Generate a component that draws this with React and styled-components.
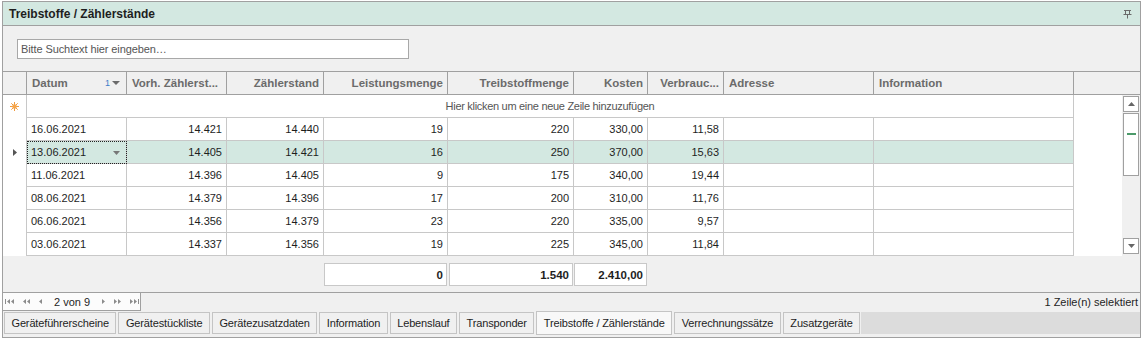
import React from "react";
import styled, { createGlobalStyle } from "styled-components";

const GlobalStyle = createGlobalStyle`
  html, body {
    margin: 0;
    padding: 0;
    background: #ffffff;
  }
  body {
    font-family: "Liberation Sans", Arial, sans-serif;
    font-size: 11px;
    color: #1e1e1e;
  }
`;

const TEMPLATE = "24px 100px 100px 97px 124px 126px 74px 76px 150px 200px 1fr";
const ROW_TEMPLATE = "24px 100px 100px 97px 124px 126px 74px 76px 150px 200px";

const columns = [
  { key: "datum", label: "Datum", align: "left" },
  { key: "vorh", label: "Vorh. Zählerst...", align: "left" },
  { key: "zaehler", label: "Zählerstand", align: "right" },
  { key: "leistung", label: "Leistungsmenge", align: "right", sum: "0" },
  { key: "treib", label: "Treibstoffmenge", align: "right", sum: "1.540" },
  { key: "kosten", label: "Kosten", align: "right", sum: "2.410,00" },
  { key: "verbrauch", label: "Verbrauc...", align: "right" },
  { key: "adresse", label: "Adresse", align: "left" },
  { key: "info", label: "Information", align: "left" },
];

const rows = [
  ["16.06.2021", "14.421", "14.440", "19", "220", "330,00", "11,58", "", ""],
  ["13.06.2021", "14.405", "14.421", "16", "250", "370,00", "15,63", "", ""],
  ["11.06.2021", "14.396", "14.405", "9", "175", "340,00", "19,44", "", ""],
  ["08.06.2021", "14.379", "14.396", "17", "200", "310,00", "11,76", "", ""],
  ["06.06.2021", "14.356", "14.379", "23", "220", "335,00", "9,57", "", ""],
  ["03.06.2021", "14.337", "14.356", "19", "225", "345,00", "11,84", "", ""],
];

const tabs = [
  "Geräteführerscheine",
  "Gerätestückliste",
  "Gerätezusatzdaten",
  "Information",
  "Lebenslauf",
  "Transponder",
  "Treibstoffe / Zählerstände",
  "Verrechnungssätze",
  "Zusatzgeräte",
];

const Panel = styled.div`
  margin: 1px 0 0 2px;
  width: 1139px;
  box-sizing: border-box;
  border: 1px solid #a0a0a0;
  background: #f0f0f0;
`;

const TitleBar = styled.div`
  height: 24px;
  box-sizing: border-box;
  display: flex;
  align-items: center;
  justify-content: space-between;
  padding: 0 8px 0 6px;
  background: #d3e8e1;
  border-bottom: 1px solid #a0a0a0;
`;

const Title = styled.span`
  font-weight: bold;
  font-size: 12px;
  color: #1e1e1e;
`;

const SearchArea = styled.div`
  height: 45px;
  box-sizing: border-box;
  padding: 13px 0 0 14px;
`;

const SearchInput = styled.input`
  width: 392px;
  height: 20px;
  box-sizing: border-box;
  border: 1px solid #a8a8a8;
  background: #fff;
  padding: 0 3px;
  font-family: inherit;
  font-size: 11px;
  letter-spacing: -0.1px;
  outline: none;
  &::placeholder {
    color: #555;
  }
`;

const HeaderRow = styled.div`
  display: grid;
  grid-template-columns: ${TEMPLATE};
  height: 24px;
  box-sizing: border-box;
  border-top: 1px solid #a0a0a0;
  border-bottom: 1px solid #a0a0a0;
`;

const HeaderCell = styled.div`
  display: flex;
  align-items: center;
  justify-content: ${(p) => (p.$align === "right" ? "flex-end" : "space-between")};
  padding: 0 4px 0 5px;
  border-right: ${(p) => (p.$last ? "none" : "1px solid #a0a0a0")};
  font-weight: bold;
  font-size: 11.5px;
  color: #6b6b6b;
  white-space: nowrap;
  overflow: hidden;
`;

const SortMark = styled.span`
  display: inline-flex;
  align-items: center;
  gap: 2px;
  margin-right: 2px;
  font-size: 9px;
  font-weight: normal;
  color: #3d7cc9;
`;

const Body = styled.div`
  display: flex;
  height: 161px;
  background: #fff;
`;

const Rows = styled.div`
  flex: 1;
`;

const NewRow = styled.div`
  display: grid;
  grid-template-columns: 24px 1047px;
  height: 23px;
`;

const Indicator = styled.div`
  display: flex;
  align-items: center;
  justify-content: center;
  border-right: 1px solid #c8c8c8;
  box-sizing: border-box;
`;

const NewRowText = styled.div`
  display: flex;
  align-items: center;
  justify-content: center;
  border-bottom: 1px solid #c8c8c8;
  border-right: 1px solid #c8c8c8;
  letter-spacing: -0.3px;
  color: #555;
`;

const DataRow = styled.div`
  display: grid;
  grid-template-columns: ${ROW_TEMPLATE};
  height: 23px;
`;

const Cell = styled.div`
  position: relative;
  display: flex;
  align-items: center;
  justify-content: ${(p) => (p.$align === "right" ? "flex-end" : "flex-start")};
  padding: 0 4px 0 4px;
  box-sizing: border-box;
  border-right: 1px solid #c8c8c8;
  border-bottom: 1px solid #c8c8c8;
  background: ${(p) => (p.$selected ? "#d3e8e1" : "#fff")};
  color: #1e1e1e;
  white-space: nowrap;
  ${(p) => p.$focused && "outline: 1px dotted #222; outline-offset: -1px;"}
`;

const DropArrow = styled.svg`
  position: absolute;
  right: 6px;
  top: 10px;
`;

const ScrollBar = styled.div`
  width: 18px;
  display: flex;
  flex-direction: column;
  align-items: center;
  padding: 1px 0 2px;
  box-sizing: border-box;
  background: #f0f0f0;
`;

const ScrollButton = styled.div`
  width: 16px;
  height: 16px;
  box-sizing: border-box;
  border: 1px solid #a0a0a0;
  background: #fff;
  display: flex;
  align-items: center;
  justify-content: center;
`;

const Thumb = styled.div`
  width: 16px;
  height: 63px;
  margin-top: 1px;
  box-sizing: border-box;
  border: 1px solid #a0a0a0;
  background: #fff;
  display: flex;
  justify-content: center;
  &::after {
    content: "";
    width: 9px;
    height: 2px;
    margin-top: 19px;
    background: #4c9a6a;
  }
`;

const Spacer = styled.div`
  flex: 1;
`;

const Footer = styled.div`
  display: grid;
  grid-template-columns: ${TEMPLATE};
  align-items: center;
  height: 37px;
  box-sizing: border-box;
  border-top: 1px solid #f0f0f0;
  border-bottom: 1px solid #a0a0a0;
`;

const SumCell = styled.div`
  height: 23px;
  margin: 0 1px 0 ${(p) => (p.$offset ? "1px" : "0")};
  box-sizing: border-box;
  border: 1px solid #c8c8c8;
  background: #fff;
  display: flex;
  align-items: center;
  justify-content: flex-end;
  padding-right: 3px;
  font-weight: bold;
  font-size: 11.5px;
`;

const StatusBar = styled.div`
  display: flex;
  justify-content: space-between;
  align-items: center;
  height: 18px;
`;

const Pager = styled.div`
  width: 138px;
  height: 18px;
  box-sizing: border-box;
  display: flex;
  align-items: center;
  gap: 9px;
  padding-left: 2px;
  background: #fcfcfc;
  border-right: 1px solid #a0a0a0;
  border-bottom: 1px solid #a0a0a0;
`;

const PagerText = styled.span`
  margin: 0 3px;
  font-size: 11px;
  color: #1e1e1e;
`;

const StatusText = styled.span`
  padding-right: 2px;
`;

const TabArea = styled.div`
  height: 26px;
  box-sizing: border-box;
  padding: 1px 0 0 1px;
`;

const TabStrip = styled.div`
  display: flex;
  height: 22px;
  gap: 2px;
`;

const Tab = styled.div`
  display: flex;
  align-items: center;
  padding: 0 6.5px;
  box-sizing: border-box;
  border: 1px solid #c4c4c4;
  white-space: nowrap;
  letter-spacing: -0.15px;
  background: ${(p) => (p.$active ? "#f8f8f8" : "#f0f0f0")};
  height: ${(p) => (p.$active ? "24px" : "22px")};
  margin-top: ${(p) => (p.$active ? "-1px" : "0")};
  color: #1e1e1e;
`;

const TabFill = styled.div`
  flex: 1;
  margin-left: -1px;
  background: #dcdcdc;
`;

function PinIcon() {
  return (
    <svg width="9" height="10" viewBox="0 0 9 10">
      <path d="M1 1.5H8M2.5 1.5V5.5M6.5 1.5V5.5M0.5 5.5H8.5M4.5 5.5V9.5" stroke="#6a6a6a" strokeWidth="1" fill="none" />
    </svg>
  );
}

function StarIcon() {
  return (
    <svg width="9" height="9" viewBox="0 0 9 9">
      <g stroke="#f29b3c" strokeWidth="1">
        <path d="M4.5 0V9M0 4.5H9M1.3 1.3L7.7 7.7M7.7 1.3L1.3 7.7" />
      </g>
      <circle cx="4.5" cy="4.5" r="2.3" fill="#f5a54a" />
    </svg>
  );
}

function RowArrow() {
  return (
    <svg width="4" height="7" viewBox="0 0 4 7">
      <path d="M0 0L4 3.5L0 7Z" fill="#555" />
    </svg>
  );
}

function Tri({ dir = "down", color = "#777", w = 7, h = 4 }) {
  const d =
    dir === "down"
      ? `M0 0L${w} 0L${w / 2} ${h}Z`
      : dir === "up"
      ? `M0 ${h}L${w} ${h}L${w / 2} 0Z`
      : dir === "left"
      ? `M${w} 0L${w} ${h}L0 ${h / 2}Z`
      : `M0 0L0 ${h}L${w} ${h / 2}Z`;
  return (
    <svg width={w} height={h} viewBox={`0 0 ${w} ${h}`}>
      <path d={d} fill={color} />
    </svg>
  );
}

function PagerIcon({ kind }) {
  const c = "#8c8c8c";
  const shapes = {
    first: (
      <svg width="9" height="5" viewBox="0 0 9 5">
        <rect x="0" y="0" width="1" height="5" fill={c} />
        <path d="M5 0L5 5L2 2.5Z M9 0L9 5L6 2.5Z" fill={c} />
      </svg>
    ),
    prevPage: (
      <svg width="7" height="5" viewBox="0 0 7 5">
        <path d="M3 0L3 5L0 2.5Z M7 0L7 5L4 2.5Z" fill={c} />
      </svg>
    ),
    prev: (
      <svg width="3" height="5" viewBox="0 0 3 5">
        <path d="M3 0L3 5L0 2.5Z" fill={c} />
      </svg>
    ),
    next: (
      <svg width="3" height="5" viewBox="0 0 3 5">
        <path d="M0 0L0 5L3 2.5Z" fill={c} />
      </svg>
    ),
    nextPage: (
      <svg width="7" height="5" viewBox="0 0 7 5">
        <path d="M0 0L0 5L3 2.5Z M4 0L4 5L7 2.5Z" fill={c} />
      </svg>
    ),
    last: (
      <svg width="9" height="5" viewBox="0 0 9 5">
        <path d="M0 0L0 5L3 2.5Z M4 0L4 5L7 2.5Z" fill={c} />
        <rect x="8" y="0" width="1" height="5" fill={c} />
      </svg>
    ),
  };
  return shapes[kind];
}

export default function App() {
  return (
    <>
      <GlobalStyle />
      <Panel>
        <TitleBar>
          <Title>Treibstoffe / Zählerstände</Title>
          <PinIcon />
        </TitleBar>

        <SearchArea>
          <SearchInput placeholder="Bitte Suchtext hier eingeben…" />
        </SearchArea>

        <HeaderRow>
          <HeaderCell />
          {columns.map((col) => (
            <HeaderCell key={col.key} $align={col.align}>
              <span>{col.label}</span>
              {col.key === "datum" && (
                <SortMark>
                  1<Tri dir="down" color="#6b6b6b" w={8} h={4} />
                </SortMark>
              )}
            </HeaderCell>
          ))}
          <HeaderCell $last />
        </HeaderRow>

        <Body>
          <Rows>
            <NewRow>
              <Indicator>
                <StarIcon />
              </Indicator>
              <NewRowText>Hier klicken um eine neue Zeile hinzuzufügen</NewRowText>
            </NewRow>
            {rows.map((row, i) => {
              const selected = i === 1;
              return (
                <DataRow key={i}>
                  <Indicator>{selected && <RowArrow />}</Indicator>
                  {row.map((val, j) => (
                    <Cell
                      key={j}
                      $align={columns[j].align === "right" || j === 1 ? "right" : "left"}
                      $selected={selected}
                      $focused={selected && j === 0}
                    >
                      {val}
                      {selected && j === 0 && (
                        <DropArrow width="7" height="4" viewBox="0 0 7 4">
                          <path d="M0 0L7 0L3.5 4Z" fill="#777" />
                        </DropArrow>
                      )}
                    </Cell>
                  ))}
                </DataRow>
              );
            })}
          </Rows>
          <ScrollBar>
            <ScrollButton>
              <Tri dir="up" color="#666" w={7} h={4} />
            </ScrollButton>
            <Thumb />
            <Spacer />
            <ScrollButton>
              <Tri dir="down" color="#666" w={7} h={4} />
            </ScrollButton>
          </ScrollBar>
        </Body>

        <Footer>
          <div />
          {columns.map((col) =>
            col.sum ? (
              <SumCell key={col.key} $offset={col.key === "treib"}>
                {col.sum}
              </SumCell>
            ) : (
              <div key={col.key} />
            )
          )}
          <div />
        </Footer>

        <StatusBar>
          <Pager>
            <PagerIcon kind="first" />
            <PagerIcon kind="prevPage" />
            <PagerIcon kind="prev" />
            <PagerText>2 von 9</PagerText>
            <PagerIcon kind="next" />
            <PagerIcon kind="nextPage" />
            <PagerIcon kind="last" />
          </Pager>
          <StatusText>1 Zeile(n) selektiert</StatusText>
        </StatusBar>

        <TabArea>
          <TabStrip>
            {tabs.map((t) => (
              <Tab key={t} $active={t === "Treibstoffe / Zählerstände"}>
                {t}
              </Tab>
            ))}
            <TabFill />
          </TabStrip>
        </TabArea>
      </Panel>
    </>
  );
}
